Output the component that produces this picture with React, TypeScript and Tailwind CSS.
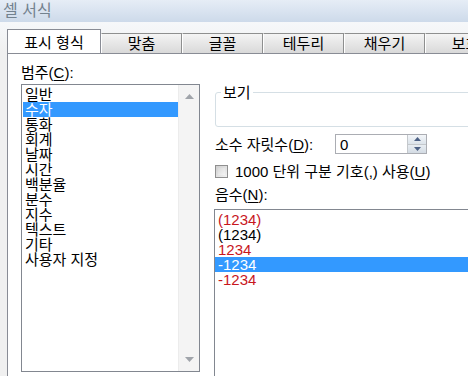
const categories = ['일반', '수자', '통화', '회계', '날짜', '시간', '백분율', '분수', '지수', '텍스트', '기타', '사용자 지정']

const negatives = [
  { text: '(1234)', red: true },
  { text: '(1234)', red: false },
  { text: '1234', red: true },
  { text: '-1234', red: false, selected: true },
  { text: '-1234', red: true },
]

const tabs = ['맞춤', '글꼴', '테두리', '채우기', '보호']

function Arrow({ up }: { up?: boolean }) {
  return (
    <svg width="9" height="5" viewBox="0 0 9 5">
      {up ? <path d="M0 5 L4.5 0 L9 5 Z" fill="#a0a4aa" /> : <path d="M0 0 L4.5 5 L9 0 Z" fill="#a0a4aa" />}
    </svg>
  )
}

function U({ children }: { children: string }) {
  return <span className="underline underline-offset-2">{children}</span>
}

export default function App() {
  return (
    <div className="w-[468px] h-[376px] overflow-hidden bg-[#f0f0f0] font-['Liberation_Sans','Noto_Sans_CJK_KR',sans-serif] text-[15px] leading-[15px] text-black">
      {/* title bar */}
      <div className="h-[22px] bg-gradient-to-b from-[#e6edf6] to-[#cddaea] pl-[3px] pt-[3px] text-[16px] leading-[16px] text-[#73828f]">
        셀 서식
      </div>

      {/* tabs */}
      <div className="h-[31px] flex items-end pl-[7px] overflow-hidden bg-gradient-to-b from-[#f6f8fa] to-[#f0f0f0]">
        <div className="relative z-10 -mb-px shrink-0 w-[94px] h-[25px] bg-white border border-b-0 border-[#898c95] flex items-center justify-center whitespace-nowrap">
          표시 형식
        </div>
        {tabs.map((t) => (
          <div
            key={t}
            className="w-[81px] h-[20px] shrink-0 border-t border-r border-[#8e8f8f] border-l border-l-white bg-gradient-to-b from-[#f4f4f4] to-[#d9d9d9] flex items-center justify-center whitespace-nowrap"
          >
            {t}
          </div>
        ))}
      </div>

      {/* panel */}
      <div className="ml-[7px] h-[324px] bg-white border-t border-l border-[#898c95] flex">
        {/* left column */}
        <div className="pl-[13px] pt-[11px] flex flex-col">
          <div>
            범주(<U>C</U>):
          </div>
          <div className="mt-[4px] w-[179px] h-[288px] border border-[#828790] flex">
            <div className="flex-1 pl-[1px] pt-[2px]">
              {categories.map((c, i) => (
                <div key={c} className={i === 1 ? 'bg-[#3399ff] text-white pl-[2px] h-[15px]' : 'pl-[2px] h-[15px]'}>
                  {c}
                </div>
              ))}
            </div>
            <div className="w-[21px] bg-[#f4f4f4] border-l border-[#ececec] flex flex-col items-center justify-between pt-[9px] pb-[9px]">
              <Arrow up />
              <Arrow />
            </div>
          </div>
        </div>

        {/* right column */}
        <div className="ml-[14px] flex-1 flex flex-col">
          <fieldset className="mt-[31px] ml-[1px] h-[42px] border border-[#d5dfe5] rounded-[3px] pl-[5px] -mr-[20px]">
            <legend className="px-[2px]">보기</legend>
          </fieldset>

          <div className="mt-[7px] ml-[1px] flex items-center h-[20px]">
            <div className="w-[120px]">
              소수 자릿수(<U>D</U>):
            </div>
            <div className="w-[92px] h-[20px] border border-[#abadb3] flex">
              <div className="flex-1 pl-[4px] pt-[2px]">0</div>
              <div className="w-[19px] flex flex-col border-l border-[#c4c8cc]">
                <div className="flex-1 bg-gradient-to-b from-[#f3f6f9] to-[#dce3ea] border-b border-[#c4c8cc] flex items-center justify-center">
                  <svg width="7" height="4" viewBox="0 0 7 4">
                    <path d="M0 4 L3.5 0 L7 4 Z" fill="#4d6185" />
                  </svg>
                </div>
                <div className="flex-1 bg-gradient-to-b from-[#e8edf2] to-[#d3dbe3] flex items-center justify-center">
                  <svg width="7" height="4" viewBox="0 0 7 4">
                    <path d="M0 0 L3.5 4 L7 0 Z" fill="#4d6185" />
                  </svg>
                </div>
              </div>
            </div>
          </div>

          <div className="mt-[10px] ml-[1px] flex items-center h-[14px]">
            <div className="w-[13px] h-[13px] border border-[#8f8f8f] bg-gradient-to-br from-[#cfcfcf] to-[#f2f2f2] p-[2px]">
              <div className="w-full h-full bg-gradient-to-br from-[#dadada] to-[#f4f4f4]" />
            </div>
            <div className="ml-[7px]">
              1000 단위 구분 기호(,) 사용(<U>U</U>)
            </div>
          </div>

          <div className="mt-[9px] ml-[1px]">
            음수(<U>N</U>):
          </div>

          <div className="mt-[7px] flex-1 -mr-[20px] border-t border-l border-[#828790] pt-[2px]">
            {negatives.map((n, i) => (
              <div
                key={i}
                className={
                  n.selected
                    ? 'h-[15px] bg-[#3399ff] text-white pl-[3px]'
                    : n.red
                      ? 'h-[15px] text-[#c8161d] pl-[3px]'
                      : 'h-[15px] pl-[3px]'
                }
              >
                {n.text}
              </div>
            ))}
          </div>
        </div>
      </div>
    </div>
  )
}
